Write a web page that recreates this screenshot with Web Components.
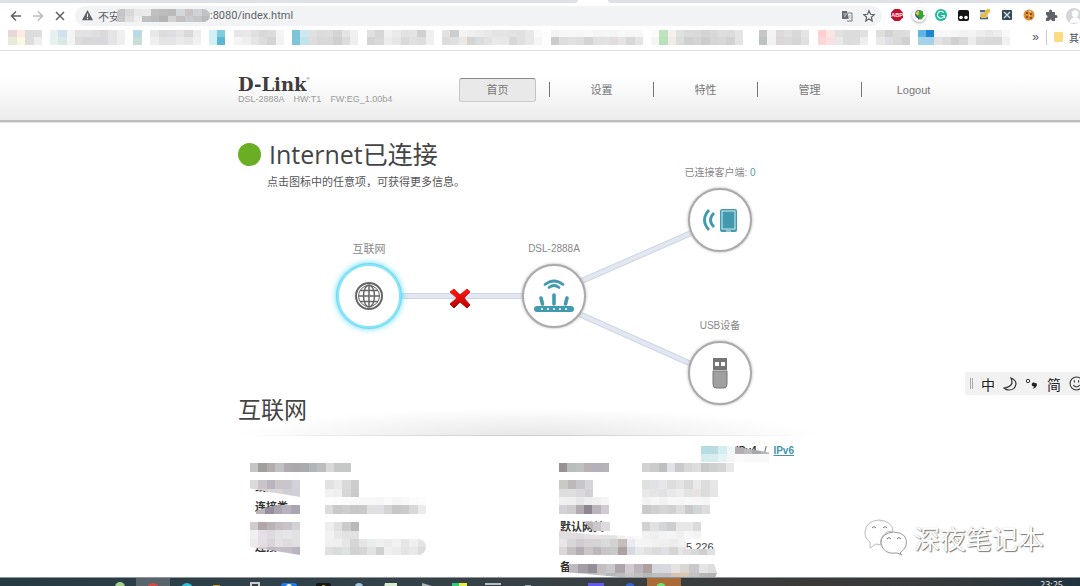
<!DOCTYPE html>
<html lang="zh-CN">
<head>
<meta charset="utf-8">
<title>D-Link DSL-2888A</title>
<style>
html, body { height: 100%; margin: 0; }
body { overflow: hidden; background: #fff; font-family: "Liberation Sans", "Noto Sans CJK SC", sans-serif; color: #444; }
</style>
</head>
<body>
<router-app></router-app>
<script>
const define = (name, html, after) => customElements.define(name, class extends HTMLElement {
  constructor() {
    super();
    const t = document.createElement('template');
    t.innerHTML = html;
    this.attachShadow({ mode: 'open' }).append(t.content.cloneNode(true));
  }
  connectedCallback() { if (after && !this.ready) { this.ready = true; after(this, this.shadowRoot); } }
});

/* Pixelated privacy patch; rows are separated by "/" and cells by spaces. */
define('pixel-patch', `<style>
:host { display: flex; flex-direction: column; overflow: hidden; }
div { display: flex; flex: 1; } i { flex: 1; }
</style>`, (el, root) => {
  for (const row of el.getAttribute('cells').split('/')) {
    const d = document.createElement('div');
    for (const c of row.trim().split(/\s+/)) {
      const i = document.createElement('i');
      i.style.background = '#' + (c.length === 2 ? c.repeat(3) : c);
      d.append(i);
    }
    root.append(d);
  }
});

define('browser-toolbar', `<style>
:host { display: block; }
.tabs { display: flex; height: 3px; background: #fff; }
.tabs i { background: #dee1e6; flex: 578 0 0; border-radius: 0 0 3px 0; }
.tabs i + i { flex-grow: 472; margin-left: 30px; border-radius: 0 0 0 3px; }
.bar { display: flex; align-items: center; height: 25px; padding-left: 9px; overflow: hidden; }
.bar button { border: 0; padding: 0; background: none; flex: none; width: 14px; height: 14px; margin-right: 8px; }
svg { display: block; width: 14px; height: 14px; }
.omni { flex: 1; min-width: 0; display: flex; align-items: center; height: 20px; padding-left: 6px; border-radius: 10px; background: #f1f3f4; color: #5f6368; font: 11px Roboto, "Noto Sans CJK SC", sans-serif; }
.omni span { margin-left: 4px; }
.omni pixel-patch { width: 93px; height: 13px; margin-left: -3px; border-radius: 5px 8px 8px 0; flex: none; }
input { flex: 1; min-width: 0; border: 0; padding: 0; background: none; color: inherit; font: inherit; height: 18px; outline: 0; }
.ext { display: flex; gap: 8px; margin-left: 8px; width: 190px; flex: none; }
.ext svg { flex: none; }
</style>
<div class="tabs"><i></i><i></i></div>
<div class="bar">
<button aria-label="back"><svg viewBox="0 0 14 14" fill="none" stroke="#5f6368" stroke-width="1.6"><path d="M12 7H3M7 2.500L2.500 7L7 11.500"/></svg></button>
<button aria-label="forward"><svg viewBox="0 0 14 14" fill="none" stroke="#babcbe" stroke-width="1.600"><path d="M2 7H11M7 2.500L11.500 7L7 11.500"/></svg></button>
<button aria-label="stop"><svg viewBox="0 0 14 14" fill="none" stroke="#5f6368" stroke-width="1.500"><path d="M3 3L11 11M11 3L3 11"/></svg></button>
<div class="omni">
<svg viewBox="0 0 14 14" style="flex:none;width:13px;height:13px"><path d="M7 1L13 12H1Z" fill="#5f6368"/><path d="M7 5V8.500M7 9.500V11" stroke="#fff" stroke-width="1.200"/></svg>
<span>不安</span>
<pixel-patch cells="c4 d8 e8 ea c0 bc b9 d5d8db c8c4c4 cfd2d6 c0c2c4/c8 e0 ee c0 bc b4 d0d2d5 c4c0c0 c8ccd0 c4c6c8 b8babd"></pixel-patch>
<input aria-label="address" value=":8080/index.html">
<svg viewBox="0 0 14 14" style="margin-right:8px"><path d="M2 2H7L9 10H2Z" fill="#686c70"/><path d="M8 4H12V12H7" fill="none" stroke="#75797d"/><path d="M3 5H7M5 4V8M4 8L7 5M8 7H12M10 6L8 10M9 8L12 10" stroke="#b8bbbe" fill="none" stroke-width=".8"/></svg>
<svg viewBox="0 0 14 14" style="margin-right:6px"><path d="M7 1.800L8.500 5.300L12.200 5.700L9.400 8.200L10.200 12L7 10L3.800 12L4.600 8.200L1.800 5.700L5.500 5.300Z" fill="none" stroke="#5f6368" stroke-width="1.200"/></svg>
</div>
<div class="ext">
<svg viewBox="0 0 14 14"><path d="M4.500 1H9.500L13 4.500V9.500L9.500 13H4.500L1 9.500V4.500Z" fill="#c70d2c"/><text x="7" y="9.200" text-anchor="middle" font-size="5.500" font-weight="700" fill="#fff">ABP</text></svg>
<svg viewBox="0 0 14 14" style="border-radius:50%;box-shadow:0 1px 3px #aaa"><circle cx="7" cy="6" r="4" fill="#38679b"/><path d="M3 5Q6 2 8 3L6 8Z" fill="#e6c33c"/><path d="M7 3H11V7H13L9 12L5 7H7Z" fill="#36a929"/><path d="M4 8L8 10L7 12Z" fill="#244f8e"/></svg>
<svg viewBox="0 0 14 14"><circle cx="7" cy="7" r="6" fill="#18bd91"/><path d="M9.800 4.800A3.500 3.500 0 1 0 10 8.500M7 7.500H10.500V10" fill="none" stroke="#fff" stroke-width="1.200"/></svg>
<svg viewBox="0 0 14 14"><rect x="2" y="2" width="11" height="11" rx="2" fill="#151515"/><circle cx="5" cy="9.500" r="1.800" fill="#fff"/><circle cx="10" cy="9.500" r="1.800" fill="#fff"/></svg>
<svg viewBox="0 0 14 14"><path d="M2 2H10V12H2Z" fill="#c3cad2"/><path d="M2 3H7M2 10H10" stroke="#526778" stroke-width="2"/><path d="M9 1H12V4L7 8L9 10H3V5L5 7Z" fill="#e8bc37"/></svg>
<svg viewBox="0 0 14 14"><rect x="2" y="2" width="10" height="10" rx="1" fill="#34495a"/><path d="M4 4L10 10M10 4L4 10" stroke="#d3e0e8" stroke-width="1.400"/></svg>
<svg viewBox="0 0 14 14"><circle cx="7" cy="7" r="5.500" fill="#dc8e37"/><g fill="#704020"><circle cx="5" cy="5" r="1"/><circle cx="9" cy="6" r="1"/><circle cx="5" cy="9" r="1"/><circle cx="9" cy="10" r="1"/></g><path d="M7 3L9 4M7 7L8 8" stroke="#ffe1a6"/></svg>
<svg viewBox="0 0 14 14"><path d="M2 4H5V3A1.500 1.500 0 0 1 8 3V4H11V7H12A1.500 1.500 0 0 1 12 10H11V13H8A1.500 1.500 0 0 0 5 13H2V10A1.500 1.500 0 0 0 2 7Z" fill="#5f6368"/></svg>
<svg viewBox="0 0 14 14" style="width:16px;height:16px"><circle cx="7" cy="7" r="7" fill="#d4d5d8"/><circle cx="8" cy="5" r="3" fill="#fff"/><path d="M3 13Q4 8 8 8Q12 8 13 13Z" fill="#fff"/></svg>
</div></div>`);

/* Each bookmark: gap before it, width, mosaic rows. */
const marks = [
 [8,34,'e6d8d8 ffe9e3 dc dd/e6ebdc fdf8e3 dd ee'],
 [8,75,'e6f0ee cfe3ee f4 e2 e2e2e5 dedee2 dadadd e4 f0/e6f2ee d7e9e6 f4 dc d8 d9d9dd d9d9dd e4 eee'],
 [8,9,'bbd9e8/c8ddd5'],
 [8,51,'e8 dc dedee2 e4 d8 ec/ef e4 e4 ea e6 f0'],
 [8,16,'d4eff3 80cbdc/d4eff3 59b9d4'],
 [9,50,'e6 e8 e0 d8 dc f4/f4 ef e5 dc d4 f2'],
 [8,66,'7ec5d9 cfe8f0 e0 dc dd d4 e4 f0/7ec5d9 c0e4ed dd d8 d8 cf dc ee'],
 [9,67,'e0 d6 f0 ea e2 e4 d0 f0/d4 d8 ec e6 da e0 dd ef'],
 [8,100,'e2 cd f3 ef ec e8 e3 e4 e2 e0 e8 fa/dc e0 efe7e2 d4 dc e2 e8e9ed e8 d8 e0 e8 f6'],
 [9,92,'f2 f6 f7 f6 f8 f4 f6 f4 f8 f6 f7/cb dd e6dfdf de d8d2d2 e0 e2 e2dcdc e4 d8 e4'],
 [8,25,'fbfbf8 bfe2bf f4f0ee/f3f7f1 bbe0bc f2ece9'],
 [0,67,'e0 da d9 d4 d8 de dc e5/dc d0 d4 cd d6 d8 d2 e4'],
 [16,50,'c5c7c8 f3 dcdada e0 d8 e4/bfc2c3 f2 dcd7d6 da d6 e0'],
 [9,50,'ffcfd2 fae5e3 e1 dc dc e0/fad8d7 fbdfe3 e8 dc dd ee'],
 [8,34,'de d2 dc dd/e8 dfdfe3 d9 d2'],
 [8,16,'5fb5e3 1e87ce/a5d2e8 a5d2e8'],
 [0,76,'f7 f7 f6 f2 f3 ed e8 ec f8/e2 dc d1 d8 ec dc da d8 f1']
];
define('bookmark-bar', `<style>
:host { display: flex; align-items: center; height: 18px; padding-bottom: 4px; border-bottom: 1px solid #dfe0e1; overflow: hidden; color: #505357; font: 10px "Noto Sans CJK SC", sans-serif; }
.list { display: flex; flex: 1; min-width: 0; overflow: hidden; }
pixel-patch { height: 15px; flex: none; }
button { border: 0; background: none; padding: 0 7px 0 0; font-size: 12px; line-height: 18px; color: inherit; }
.other { display: flex; align-items: center; gap: 6px; width: 34px; padding-left: 7px; border-left: 1px solid #ccc; white-space: nowrap; overflow: hidden; box-sizing: border-box; color: inherit; text-decoration: none; flex: none; }
.other i { width: 9px; height: 10px; background: #fbdc83; border-radius: 1px; flex: none; }
</style><div class="list"></div><button aria-label="more bookmarks">»</button><a class="other" href="#"><i></i>其他</a>`, (el, root) => {
  for (const [gap, width, cells] of marks) {
    const p = document.createElement('pixel-patch');
    p.setAttribute('cells', cells);
    p.style.cssText = `margin-left:${gap}px;width:${width}px`;
    root.querySelector('.list').append(p);
  }
});

define('router-header', `<style>
:host { display: flex; align-items: center; height: 71px; box-sizing: border-box; padding-left: 238px; background: linear-gradient(#fff 35%, #ededed); border-bottom: 2px solid #bdbdbd; box-shadow: 0 1px 1px #e4e4e4; position: relative; }
.brand { width: 221px; flex: none; padding-top: 10px; }
.logo { display: flex; font: 700 18px/16px "DejaVu Serif", serif; color: #3c3c3c; }
.logo sup { font: 4px/4px "Liberation Sans", sans-serif; }
.ver { display: flex; gap: 9px; font-size: 9px; line-height: 12px; color: #9b9b9b; white-space: nowrap; }
nav { display: flex; align-items: center; padding-top: 8px; }
</style>
<div class="brand"><div class="logo">D-Link<sup>®</sup></div><div class="ver"><span>DSL-2888A</span><span>HW:T1</span><span>FW:EG_1.00b4</span></div></div>
<nav><nav-item active>首页</nav-item><nav-item>设置</nav-item><nav-item>特性</nav-item><nav-item>管理</nav-item><nav-item>Logout</nav-item></nav>`);

define('nav-item', `<style>
:host { display: flex; align-items: center; }
:host(:not([active]))::before { content: ""; width: 1px; height: 15px; background: #777; margin: 0 13px; }
a { display: block; box-sizing: border-box; width: 77px; height: 24px; font-size: 11px; line-height: 22px; text-align: center; color: #777; text-decoration: none; border: 1px solid transparent; border-radius: 3px; }
:host([active]) a { background: #e9e9e9; border-color: #888 #c4c4c4 #ccc; }
</style><a href="#"><slot></slot></a>`);

define('topology-node', `<style>
:host { position: absolute; display: flex; flex-direction: column; align-items: center; gap: 8px; width: 100px; }
span { height: 14px; font-size: 10px; line-height: 14px; color: #888; white-space: nowrap; }
button { width: 64px; height: 64px; padding: 0; border: 2px solid #aaa; border-radius: 50%; background: #fff; box-shadow: 0 0 3px #aaa; display: grid; place-items: center; }
:host([selected]) button { border-color: #8ee5f8; box-shadow: 0 0 7px #2ccdf0; outline: 1px solid #65dcf7; }
:host([selected]) span { font-size: 11px; }
</style><span><slot name="label"></slot></span><button aria-label="device"><slot></slot></button>`);

define('network-map', `<style>
:host { display: block; position: relative; z-index: 1; height: 272px; }
h1 { display: flex; align-items: center; gap: 8px; margin: 0; padding-top: 14px; font: 400 25px/36px "Open Sans", "Noto Sans CJK SC", sans-serif; color: #444; }
h1 i { width: 23px; height: 23px; border-radius: 50%; background: #6aaf23; }
p { margin: 2px 0 0 29px; font-size: 11px; line-height: 16px; color: #555; }
.lines { position: absolute; inset: 0; width: 100%; height: 100%; }
topology-node svg { display: block; }
b { font-weight: 400; color: #4a9fb8; }
</style>
<h1><i></i>Internet已连接</h1>
<p>点击图标中的任意项，可获得更多信息。</p>
<svg class="lines" fill="none" aria-hidden="true">
<path d="M160 174H290M330 165L460 108M330 187L460 245" stroke="#cfd6e4" stroke-width="6"/>
<path d="M160 174H290M330 165L460 108M330 187L460 245" stroke="#e2e7f2" stroke-width="4"/>
<defs><linearGradient id="r" x1="0" y1="0" x2="0" y2="1"><stop stop-color="#ff1a14"/><stop offset="1" stop-color="#b90000"/></linearGradient></defs>
<path d="M216 167L222 173L229 167L232 170L226 176L232 183L229 186L222 180L216 186L212 182L219 176L212 170Z" fill="url(#r)" stroke="url(#r)"/>
</svg>
<topology-node selected style="left:81px;top:120px"><span slot="label">互联网</span>
<svg width="30" height="30" viewBox="0 0 30 30" fill="none" stroke="#666"><circle cx="15" cy="15" r="13" stroke-width="2"/><circle cx="15" cy="15" r="10.500" stroke-width="1"/><ellipse cx="15" cy="15" rx="5.500" ry="11" stroke-width="1.500"/><path d="M15 4V26M4 15H26M6 9.500H24M6 20.500H24" stroke-width="1.500"/></svg></topology-node>
<topology-node style="left:266px;top:120px"><span slot="label">DSL-2888A</span>
<svg width="42" height="36" viewBox="0 0 42 36" fill="none" stroke="#429aae" stroke-linecap="round"><path d="M12 6.500Q21-.5 30 6.500M16 9.500Q21 5.500 26 9.500" stroke-width="2.700"/><path d="M21 17V26M8 20L9.500 26M34 20L32.500 26" stroke-width="3.600"/><path d="M4 31H38" stroke-width="6"/><g fill="#fff" stroke="none"><circle cx="9" cy="31" r="1"/><circle cx="15" cy="31" r="1"/><circle cx="21" cy="31" r="1"/><circle cx="27" cy="31" r="1"/><circle cx="33" cy="31" r="1"/></g></svg></topology-node>
<topology-node style="left:432px;top:44px"><span slot="label">已连接客户端: <b>0</b></span>
<svg width="36" height="26" viewBox="0 0 36 26" fill="none" stroke="#429aae"><path d="M7 3Q-2 13 7 23M12 6Q5 13 12 20" stroke-width="2.800"/><rect x="18" y="2" width="17" height="23" rx="2" fill="#429aae" stroke="none"/><rect x="20" y="4" width="13" height="18" stroke="#d9edf1" stroke-width="1"/><path d="M24 24H29" stroke="#d9edf1"/></svg></topology-node>
<topology-node style="left:432px;top:197px"><span slot="label">USB设备</span>
<svg width="16" height="32" viewBox="0 0 16 32"><path d="M1 1H15V13H1Z" fill="#757575"/><path d="M3 5H7V9H3ZM9 5H13V9H9Z" fill="#fff"/><path d="M1 14H15V27Q15 31 12 31H4Q1 31 1 27Z" fill="#a0a0a0" stroke="#777"/></svg></topology-node>`);

define('status-panel', `<style>
:host { display: block; position: relative; max-width: 578px; }
h2 { margin: 0; height: 42px; box-sizing: border-box; font: 400 23px/28px "Noto Sans CJK SC", sans-serif; color: #444; background: linear-gradient(90deg, transparent 2%, #ccc 50%, transparent 99%) bottom / 100% 1px no-repeat, radial-gradient(ellipse 50% 28px at 50% 100%, #e7e7e7, #fff); }
.ver { display: flex; gap: 7px; justify-content: flex-end; margin: 9px 22px 0 0; font-size: 10px; line-height: 12px; }
.ver b { color: #333; } .ver a { color: #4395ad; font-weight: 700; }
.cols { display: grid; grid-template-columns: 305px 1fr; align-items: start; padding-left: 17px; }
table { border-spacing: 0; table-layout: fixed; width: 100%; font-size: 11px; line-height: 20px; color: #444; }
th, td { height: 20px; padding: 0; text-align: left; white-space: nowrap; }
th { width: 83px; color: #333; } 
td.end { padding-left: 43px; }
pixel-patch { position: absolute; }
</style>
<h2>互联网</h2>
<div class="ver"><b>IPv4</b><span>/</span><a href="#">IPv6</a></div>
<div class="cols">
<table><tr><th></th><td></td></tr><tr><th>线路</th><td></td></tr><tr><th>连接类</th><td></td></tr><tr><th></th><td></td></tr><tr><th>连接</th><td></td></tr></table>
<table><tr><th></th><td></td></tr><tr><th></th><td></td></tr><tr><th></th><td></td></tr><tr><th>默认网关</th><td></td></tr><tr><th></th><td class="end">5.226</td></tr><tr><th>备</th><td></td></tr></table>
</div>`, (el, root) => {
  /* x, y, width, height, cells, optional clip shape */
  const patches = [
   [463,52,68,16,'b6dce3 b9dbe1 d8edf0 f0f7f8 b3adb2 bcb9bd a7a8a9 b8b9b9/d6edf0 d9edf0 e3f4f6 f6 fa f8 f8 f8','polygon(0 0,45% 0,100% 40%,100% 100%,0 100%)'],
   [12,69,101,9,'c6c5c5 a09f9e b0adab c0c0c6 adabad aaa8aa a9acae b0b6b9 bebdbd d9d9da c6c8c7 c6c8c7'],
   [12,86,50,17,'dcd8dc c8c4c8 b9b5bf c9c5cb c8c6cc d3d1d9/e6e1e3 d8d3d5 d8d4d9 d8d4d9 d0cdd2 d2cfd9','polygon(0 0,100% 0,100% 100%,0 50%)'],
   [18,111,44,9,'bab4bc 968e9e aaa4ae b7b2bb aaa5b3','polygon(0 65%,45% 0,100% 0,100% 100%,0 100%)'],
   [12,128,50,33,'d0cccd b0a6ac b8b3b7 c4bec0 c8c3cb d3d0d6/f1edf0 e4dfe4 ddd9df e5e2e5 e8e5e8 e4e1e5/eeebee e2dee1 d8d4d8 e4e0e4 dedbdd e3e0e3/e1dfe2 d3cdd3 c2bbc5 c3bdc8 c3bdc9 bcb5c1','polygon(0 0,100% 0,100% 100%,0 75%)'],
   [87,86,34,17,'e2 eb d9 cd/f1 ef d7 ca'],
   [87,103,101,8,'fd fc fb f9 f8 f8 f6 fa f5 f9 fb fc'],
   [87,111,101,9,'dc c9 cd c7 c9 e0 dfdfe5 d4 c7 ca d8 eb'],
   [87,128,34,17,'ee e1 cb b9/f2 e8 e2 e1'],
   [87,145,101,16,'f0 ef e7 d6 e5 e9ecec ef eb f2 e6 ef e4/dfe1e1 dadcdc dfe1e1 cfd1d2 d6 e3 cf ef eb e4 e8 dc','inset(0 round 0 10px 10px 0)'],
   [321,69,50,9,'999493 b8bebc bfc1c1 b9b2b5 b3b1ba b8b2b7'],
   [404,69,92,9,'d2 cb bebfc1 e1e2e7 c8c9c8 d8 dd c8c9ca cecfcf d4 e8'],
   [321,86,34,17,'c8cac3 bfb8bb c8c6cd d7d5d9/ddd de dcd7dc d3d0d5'],
   [321,103,50,8,'f0 ef e7e5e8 ee f0 f5'],
   [321,111,50,9,'d5d1d7 cecccc b3a9b1 8c8592 bab4bc cfcbd1'],
   [404,86,76,17,'e0e2df e2e3e5 e7 dd e4 d9 e9 dc e6/e8 e5 e0e2e5 e8 efecec e3 e8e4e4 dc e5'],
   [404,103,68,8,'f2 f6 f2 f7 f6 f8 f7 f5'],
   [404,111,68,9,'ca d0 d5 d1 dd c7c9cb d2d5d5 dd'],
   [346,128,26,9,'bab5bf cac7c9 ddd9dd','polygon(0 0,100% 0,100% 100%,35% 100%)'],
   [321,137,83,9,'e2dfe2 e1dde0 dedade e4e0e3 e6e2e4 e5e1e2 e2 f0 f5 fa','polygon(0 0,40% 40%,100% 60%,100% 100%,0 100%)'],
   [404,128,59,17,'d1d2d0 e0e2e2 d4d5d7 cdcfce e7 e8 dadbda/f2f2f5 ef f3f3f6 f4 f0 f6 f3'],
   [321,145,127,16,'e8e5e7 dad5d7 ceccd0 d8d2d5 d4 dadadc d2 c5bdbb eaeaf0 f5f5f8 f4 f0 ef ec f2/dbd7d9 c6c0c3 b4adb2 cbc4c7 bbb8bd c7c4c6 c8 aca2a1 d8d9e1 e7e8ec e1 db dfe0e3 d5 e5'],
   [445,155,32,6,'dedde0 d8d8da cfcfd1 e1e1e4'],
   [331,170,148,17,'bcb8c1 a29fa6 938e97 c4bec2 c9c7ce ada5aa cfcbd0 bbb5bb ada19f d7d8dd d8d9e0 e5e3df d7d7d3 c9c7c9 e4 dd/c9 c5 bd c5 b8 bd c8 c0 b7 bf bf d6c3b1 e0c6b1 c3 b7 b3','polygon(0 0,98% 0,100% 50%,98% 100%,63% 100%,0 50%)']
  ];
  for (const [x,y,w,h,cells,clip] of patches) {
    const p = document.createElement('pixel-patch');
    p.setAttribute('cells', cells);
    p.style.cssText = `left:${x}px;top:${y}px;width:${w}px;height:${h}px;${clip ? 'clip-path:' + clip : ''}`;
    root.append(p);
  }
});

define('ime-bar', `<style>
:host { position: absolute; right: 0; top: 372px; width: 115px; height: 23px; box-sizing: border-box; padding-left: 5px; background: #f1f1f1; display: flex; align-items: center; gap: 8px; overflow: hidden; color: #222; font: 14px/22px "Noto Sans CJK SC", sans-serif; }
i { width: 1px; height: 11px; border: solid #aaa; border-width: 0 1px; flex: none; }
svg { flex: none; } span { flex: none; width: 14px; }
</style><i></i><span>中</span><svg width="14" height="14" viewBox="0 0 14 14" fill="none" stroke="#333" stroke-width="1.200"><path d="M8 1Q13 3 13 7Q12 13 6 13Q3 13 1 11Q8 10 9 6Q9 3 8 1Z"/></svg><svg width="14" height="14" viewBox="0 0 14 14"><circle cx="3" cy="4" r="1.700" fill="none" stroke="#333"/><path d="M10 6A2 2 0 1 0 9 9.500Q9 11 7 12Q12 11 12 7Q11.500 6 10 6Z" fill="#222"/></svg><span>简</span><svg width="15" height="15" viewBox="0 0 14 14" fill="none" stroke="#333"><circle cx="7" cy="7" r="6"/><path d="M4 8.500Q7 12 10 8.500M5 4V6M9 4V6"/></svg>`);

define('page-watermark', `<style>
:host { position: absolute; right: 36px; bottom: 28px; display: flex; align-items: center; gap: 6px; color: #fff; font: 26px/40px "Noto Sans CJK SC", sans-serif; text-shadow: 1px 1px 1px #777, 0 0 1px #aaa; }
</style><svg width="44" height="38" viewBox="0 0 44 38" fill="#fff" stroke="#999"><path d="M6 23Q1 20 1 13Q2 2 15 1Q28 2 29 12L23 13Q15 18 17 26L12 25L6 29Z" stroke="#bbb"/><path d="M36 34Q40 31 42 27Q45 14 30 13Q17 14 17 24Q19 36 33 34L38 36Z"/><path d="M8 9Q10 6 12 9M19 9Q21 6 23 9M23 20Q25 17 27 20M33 20Q35 17 37 20" fill="none" stroke="#777"/></svg><span>深夜笔记本</span>`);

define('task-bar', `<style>
:host { display: flex; justify-content: flex-end; height: 9px; overflow: hidden; position: relative; z-index: 1; flex: none; box-sizing: border-box; border-top: 1px solid #8f9699; background: linear-gradient(90deg, #263a43, #30414a 25%, #384145 50%, #3b3a39 75%, #35383a 88%, #20343f); }
svg { flex: 1; height: 9px; }
time { width: 40px; font: 9px/12px "Open Sans", sans-serif; color: #eee; padding-top: 1px; flex: none; }
</style><svg aria-hidden="true"><path d="M136 0H170V9H136Z" fill="#59656b"/><circle cx="120" cy="9" r="5" fill="#a9cf90"/><circle cx="153" cy="11" r="6" fill="#d64c43"/><circle cx="187" cy="11" r="6" fill="#34bed4"/><path d="M213 7H220V9H213Z" fill="#d89e30"/><path d="M251 9V5H259V9" fill="none" stroke="#ccc" stroke-width="2"/><rect x="281" y="5" width="16" height="8" rx="3" fill="#197cf1"/><circle cx="289" cy="9" r="3" fill="#fff"/><rect x="316" y="5" width="15" height="8" rx="2" fill="#171717"/><path d="M322 7H325V9H322Z" fill="#b18b25"/><circle cx="359" cy="9" r="4" fill="#9ec3dd"/><path d="M385 5H397V9H384Z" fill="#d8ead2"/><path d="M422 5L432 8V9H422Z" fill="#aeb5b8"/><path d="M452 5H459V9H452Z" fill="#26cf78"/><path d="M459 5H467V9H459Z" fill="#e7ed47"/><path d="M485 5H501V7H485Z" fill="#b6bbc2"/><path d="M525 7H531V9H525Z" fill="#aaa"/><path d="M588 5H604V9H588Z" fill="#6258f2"/><circle cx="630" cy="10" r="5" fill="#3567d2"/><path d="M647 0H681V9H647Z" fill="#a96c39"/><circle cx="661" cy="10" r="5" fill="#6ce275"/></svg><time>23:25</time>`);

define('router-app', `<style>
:host { display: flex; flex-direction: column; height: 100vh; position: relative; overflow: hidden; }
browser-toolbar, bookmark-bar, router-header { flex: none; }
main { flex: 1; min-height: 0; padding-left: 238px; }
</style><browser-toolbar></browser-toolbar><bookmark-bar></bookmark-bar><router-header></router-header>
<main><network-map></network-map><status-panel></status-panel></main>
<task-bar></task-bar><ime-bar></ime-bar><page-watermark></page-watermark>`);
</script>
</body>
</html>
